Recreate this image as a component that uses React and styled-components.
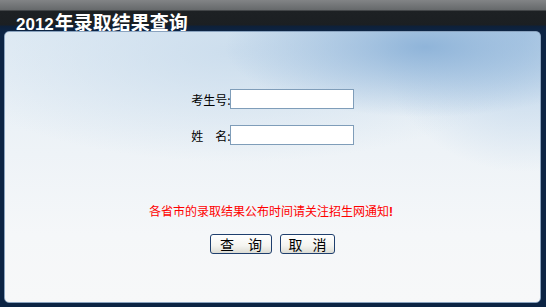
import React, { useState } from "react";
import styled, { createGlobalStyle } from "styled-components";

const GlobalStyle = createGlobalStyle`
  html, body {
    margin: 0;
    padding: 0;
    background: #0d2441;
  }
  body {
    font-family: "Liberation Sans", "Noto Sans CJK SC", sans-serif;
  }
`;

const App = () => {
  const [formValues, setFormValues] = useState({ ksh: "", xm: "" });

  const handleChange = (e) =>
    setFormValues({ ...formValues, [e.target.name]: e.target.value });

  return (
    <Page>
      <GlobalStyle />
      <Header>
        <Title>
          <span className="num">2012</span>
          <span className="cjk">年录取结果查询</span>
        </Title>
      </Header>
      <Frame>
        <Panel>
          <Form onSubmit={(e) => e.preventDefault()}>
            <Row>
              <Label>考生号:</Label>
              <Input name="ksh" value={formValues.ksh} onChange={handleChange} />
            </Row>
            <Row>
              <Label>姓　名:</Label>
              <Input name="xm" value={formValues.xm} onChange={handleChange} />
            </Row>
            <Notice>
              各省市的录取结果公布时间请关注招生网通知<b>!</b>
            </Notice>
            <Buttons>
              <Button type="submit" $w={62} $gap={14}>
                <span>查</span>
                <span>询</span>
              </Button>
              <Button
                type="reset"
                $w={55}
                $gap={10}
                onClick={() => setFormValues({ ksh: "", xm: "" })}
              >
                <span>取</span>
                <span>消</span>
              </Button>
            </Buttons>
          </Form>
        </Panel>
      </Frame>
    </Page>
  );
};

export default App;

const Page = styled.div`
  width: 546px;
  height: 307px;
  display: flex;
  flex-direction: column;
  overflow: hidden;
`;

const Header = styled.div`
  height: 31px;
  flex: none;
  background: linear-gradient(
    to bottom,
    #828486 0px,
    #66696b 10px,
    #1d2124 11px,
    #1b1f22 25px,
    #0e2038 26px,
    #0c2444 31px
  );
  padding-left: 16px;
  box-sizing: border-box;
`;

const Title = styled.h1`
  margin: 0;
  padding-top: 10px;
  color: #fff;
  font-weight: bold;
  line-height: 19px;
  white-space: nowrap;
  .num {
    font-family: "Liberation Sans", sans-serif;
    font-size: 17px;
  }
  .cjk {
    font-family: "Noto Sans CJK SC", sans-serif;
    font-size: 19px;
    margin-left: 1px;
  }
`;

const Frame = styled.div`
  flex: 1;
  background: #0c2444;
  padding: 0 5px 4px 4px;
  display: flex;
`;

const Panel = styled.div`
  flex: 1;
  border: 1px solid #8aa3bf;
  border-radius: 5px;
  background:
    radial-gradient(ellipse 200px 70px at 420px 15px, rgba(140, 178, 216, 0.95), rgba(140, 178, 216, 0) 100%),
    radial-gradient(ellipse 150px 140px at 520px 0px, rgba(175, 203, 230, 0.85), rgba(175, 203, 230, 0) 100%),
    radial-gradient(ellipse 300px 110px at 230px 20px, rgba(200, 219, 236, 0.85), rgba(200, 219, 236, 0) 100%),
    linear-gradient(to bottom, #e3edf5 0%, #eef3f7 45%, #f5f7f9 75%, #f7f8f9 100%);
  display: flex;
  justify-content: center;
`;

const Form = styled.form`
  display: flex;
  flex-direction: column;
  align-items: center;
  padding-top: 57px;
`;

const Row = styled.div`
  display: grid;
  grid-template-columns: 40px 124px;
  align-items: center;
  margin-bottom: 16px;
`;

const Label = styled.span`
  font-family: "Noto Sans CJK SC", sans-serif;
  font-size: 12px;
  color: #000;
  text-align: right;
  white-space: nowrap;
`;

const Input = styled.input`
  width: 124px;
  height: 20px;
  box-sizing: border-box;
  border: 1px solid #7f9db9;
  background: #fff;
  padding: 1px 2px;
  font-size: 12px;
  outline: none;
`;

const Notice = styled.div`
  margin-top: 42px;
  margin-right: 3px;
  font-family: "Noto Sans CJK SC", sans-serif;
  font-size: 12px;
  line-height: 16px;
  color: #ff0000;
  white-space: nowrap;
  b {
    font-family: "Liberation Sans", sans-serif;
    font-weight: bold;
  }
`;

const Buttons = styled.div`
  display: flex;
  gap: 8px;
  margin-top: 14px;
`;

const Button = styled.button`
  width: ${(p) => p.$w}px;
  height: 20px;
  box-sizing: border-box;
  border: 1px solid #1f3f6e;
  border-radius: 3px;
  background: linear-gradient(to bottom, #ffffff 0%, #f4f4f0 60%, #dcdcd4 100%);
  display: flex;
  align-items: center;
  justify-content: center;
  gap: ${(p) => p.$gap}px;
  font-family: "Noto Sans CJK SC", sans-serif;
  font-size: 14px;
  line-height: 16px;
  color: #000;
  padding: 0;
  cursor: pointer;
`;
